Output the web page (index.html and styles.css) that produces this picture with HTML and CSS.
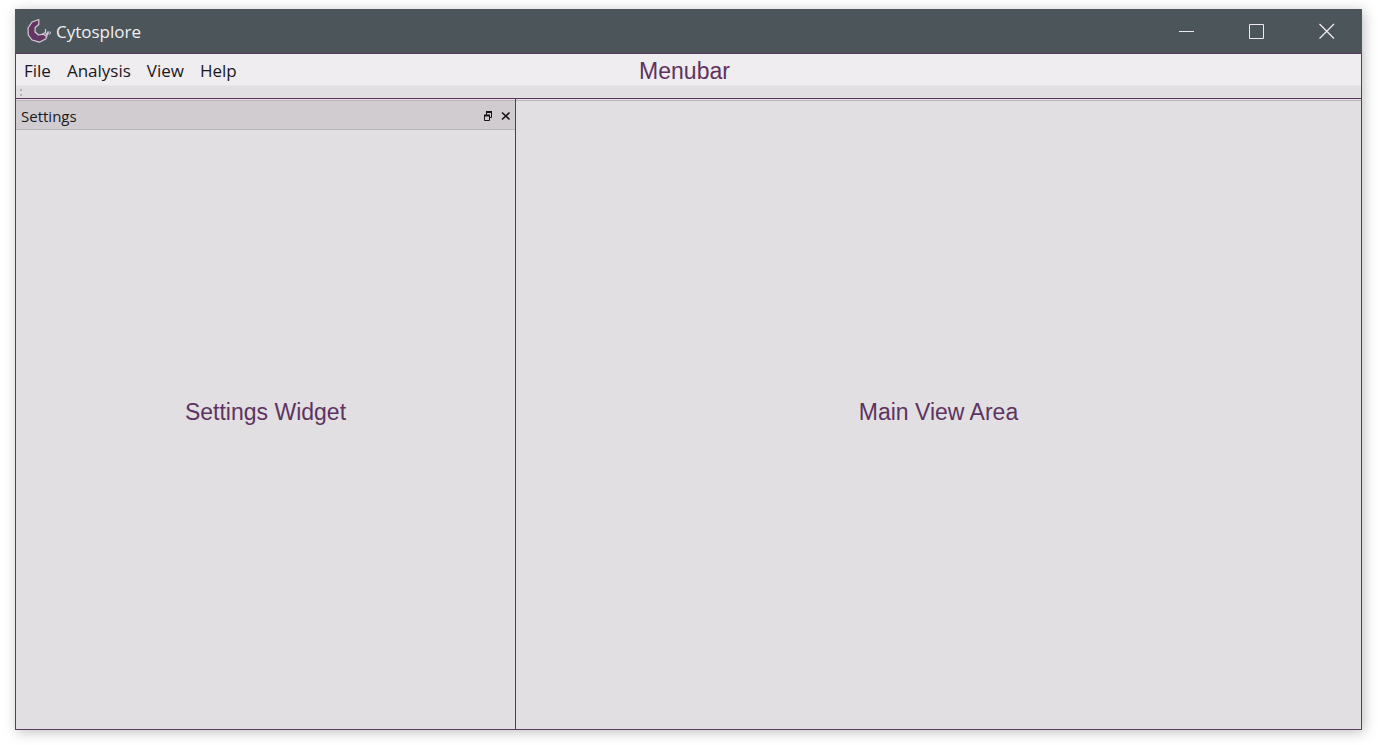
FILE: index.html
```html
<!DOCTYPE html>
<html lang="en">
<head>
<meta charset="utf-8">
<title>Cytosplore</title>
<link rel="stylesheet" href="styles.css">
</head>
<body>
<div class="window">
  <header class="titlebar">
    <svg class="logo" width="26" height="26" viewBox="0 0 26 26" aria-hidden="true">
      <path d="M12.8 1.5 L6 4 L2 10 L2.3 17 L6 22 L13.5 24.2 L20 20.8 L20.5 18.5 L17.5 16.2 L12.5 17 L9 14 L9.2 9.5 L12.8 6.5 Z" fill="#643563" stroke="#d6cdd8" stroke-width="1.2" stroke-linejoin="round"/>
      <path d="M16.5 16 L19.5 14.5 V11 M19.5 14.5 L21 17.5 L22 13.5" fill="none" stroke="#d6cdd8" stroke-width="1.2"/>
      <circle cx="23.3" cy="15" r="1.2" fill="#643563" stroke="#d6cdd8"/>
    </svg>
    <h1 class="app-name">Cytosplore</h1>
    <div class="window-buttons">
      <button class="window-button" aria-label="Minimize"><svg width="16" height="16" viewBox="0 0 16 16"><path d="M0 8.5H15"/></svg></button>
      <button class="window-button" aria-label="Maximize"><svg width="16" height="16" viewBox="0 0 16 16"><path d="M.5 1.5H14.5V15.5H.5Z"/></svg></button>
      <button class="window-button" aria-label="Close"><svg width="16" height="16" viewBox="0 0 16 16"><path d="M.5 1L15 15.5M15 1L.5 15.5" stroke-width="1.3"/></svg></button>
    </div>
  </header>
  <div class="client">
    <nav class="menubar">
      <div class="menus">
        <button class="menu">File</button>
        <button class="menu">Analysis</button>
        <button class="menu">View</button>
        <button class="menu">Help</button>
      </div>
      <span class="label">Menubar</span>
    </nav>
    <div class="toolbar"><span class="grip"></span></div>
    <div class="workspace">
      <aside class="dock">
        <div class="dock-title">
          <h2 class="dock-name">Settings</h2>
          <button class="dock-button" aria-label="Float"><svg width="10" height="10" viewBox="0 0 10 10"><path d="M3 1H9M1 4.5H7" stroke-width="2"/><path d="M3.5 1V4M8.5 1V6.5H7M1.5 4V9.5H6.5V4"/></svg></button>
          <button class="dock-button" aria-label="Close settings"><svg width="10" height="10" viewBox="0 0 10 10"><path d="M1 1.5L8.5 8.5M8.5 1.5L1 8.5" stroke-width="1.6"/></svg></button>
        </div>
        <div class="dock-body"><span class="label">Settings Widget</span></div>
      </aside>
      <main class="view"><span class="label">Main View Area</span></main>
    </div>
  </div>
</div>
</body>
</html>
```
FILE: styles.css
```css
* {
  box-sizing: border-box;
}

body {
  margin: 0;
  min-height: 100vh;
  display: flex;
  padding: 9px 16px 15px 15px;
  background: #fff;
  color: #1b171c;
  font-family: "Open Sans", "Noto Sans", sans-serif;
}

button {
  margin: 0;
  padding: 0;
  border: 0;
  background: none;
  color: inherit;
  font: inherit;
}

svg {
  display: block;
}

.window {
  flex: 1;
  display: flex;
  flex-direction: column;
  box-shadow: 2px 2px 12px rgba(0, 0, 0, 0.25);
}

.titlebar {
  display: flex;
  align-items: center;
  height: 44px;
  padding-left: 11px;
  background: #4c555a;
  color: #f2f0f3;
}

.app-name {
  margin: 2px 0 0 4px;
  font-size: 17px;
  font-weight: 400;
  line-height: 24px;
}

.window-buttons {
  display: flex;
  align-self: stretch;
  margin-left: auto;
}

.window-button {
  display: grid;
  place-items: center;
  width: 70px;
}

.window-button path {
  fill: none;
  stroke: #eeebef;
}

.client {
  flex: 1;
  display: flex;
  flex-direction: column;
  border: 1px solid #5e3a60;
  background: #e1dfe2;
}

.menubar {
  display: grid;
  grid-template-columns: 1fr auto 1fr;
  align-items: center;
  height: 32px;
  padding: 2px 8px 0 0;
  border-bottom: 1px solid #e8e6e9;
  background: #efedf0;
}

.menus {
  display: flex;
  gap: 16px;
  padding-left: 8px;
}

.menu {
  font-size: 17px;
  line-height: 24px;
}

.label {
  color: #5e335f;
  font-family: "Liberation Sans", Arial, sans-serif;
  font-size: 23px;
  line-height: 28px;
}

.toolbar {
  display: flex;
  align-items: center;
  height: 13px;
  padding-left: 4px;
  border-bottom: 1px solid #5e335f;
}

.grip {
  width: 2px;
  height: 7px;
  border-top: 2px solid #b5b2b6;
  border-bottom: 2px solid #b5b2b6;
}

.workspace {
  flex: 1;
  display: flex;
}

.dock {
  display: flex;
  flex-direction: column;
  width: 500px;
  border-right: 1px solid #5e335f;
}

.dock-title {
  display: flex;
  align-items: center;
  gap: 8px;
  height: 31px;
  padding: 2px 4px 0 5px;
  border-top: 1px solid #e1dfe2;
  border-bottom: 1px solid #b9b5b9;
  background: #d1ccd0;
  box-shadow: inset 0 1px #b9b5b9;
}

.dock-name {
  flex: 1;
  margin: 0;
  font-size: 15px;
  font-weight: 400;
  line-height: 22px;
}

.dock-button path {
  fill: none;
  stroke: #171318;
}

.dock-body,
.view {
  flex: 1;
  display: grid;
  place-items: center;
}

.dock-body {
  padding-bottom: 36px;
}

.view {
  padding-bottom: 6px;
  border-top: 1px solid #e1dfe2;
  box-shadow: inset 0 1px #b9b5b9;
}
```
